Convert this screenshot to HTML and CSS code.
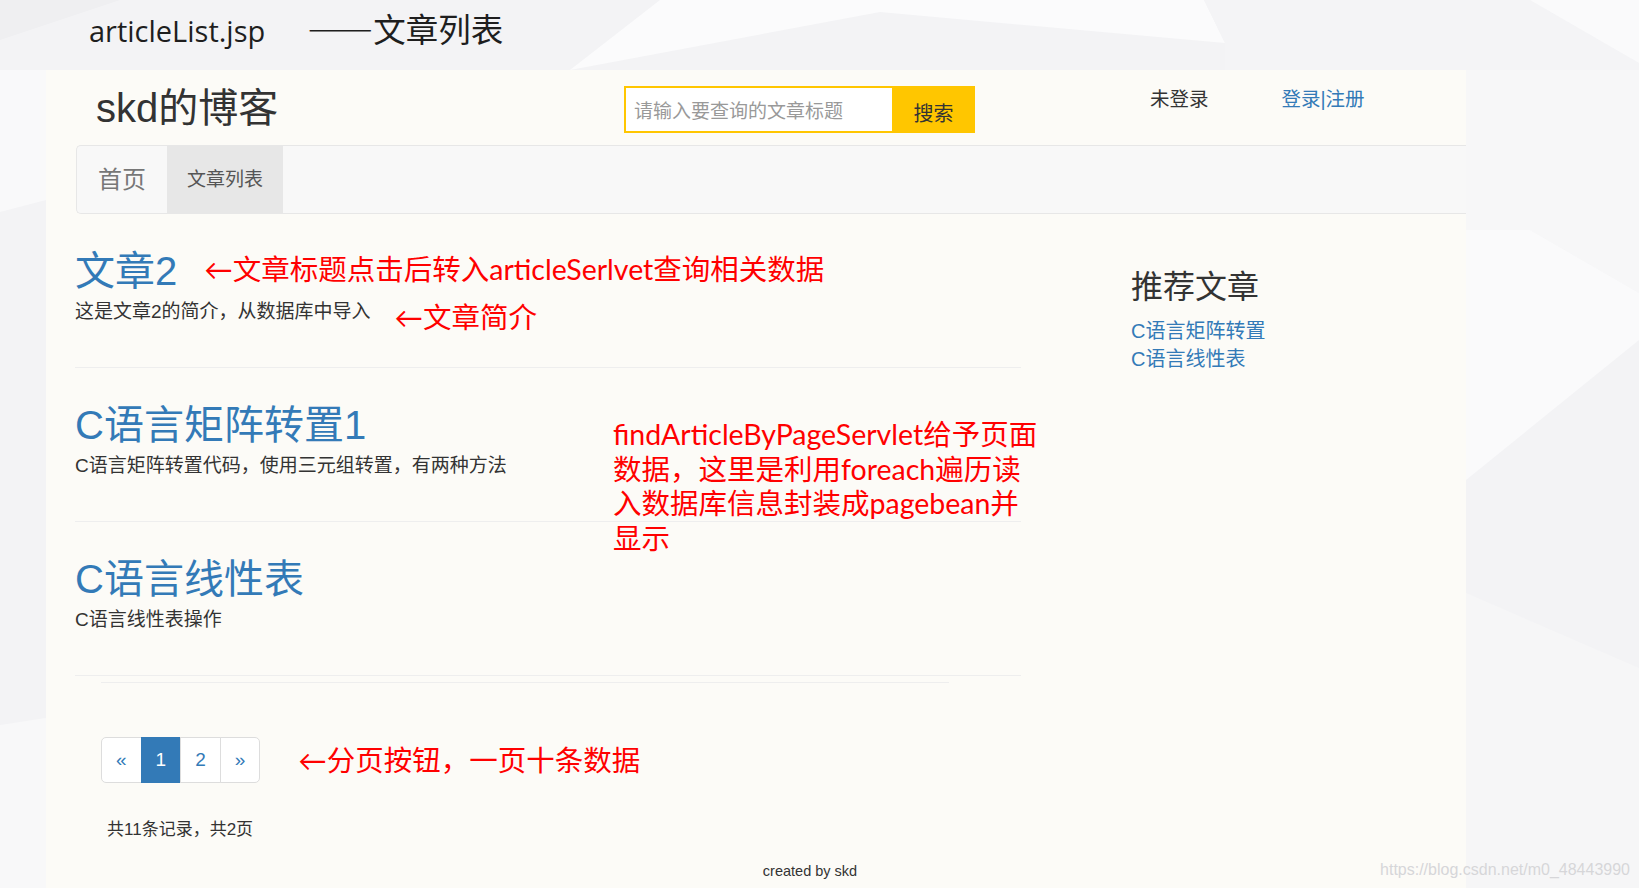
FILE: index.html
```html
<html lang="zh-CN">
<head>
    <meta charset="UTF-8">
    <meta name="viewport" content="width=device-width, initial-scale=1.0">
    <title>articleList.jsp</title>
    <link rel="stylesheet" href="styles.css">
</head>
<body>
    <!-- slide backdrop -->
    <svg class="backdrop" width="1639" height="888" viewBox="0 0 1639 888">
        <rect width="1639" height="888" fill="#f3f3f5"/>
        <polygon points="0,0 120,0 0,40" fill="#efeff1"/>
        <polygon points="570,70 660,0 1204,0 1225,43 880,12" fill="#fbfbfc"/>
        <polygon points="1204,0 1530,0 1639,63 1639,70 1225,70 1225,43" fill="#f4f4f6"/>
        <polygon points="1530,0 1639,0 1639,63" fill="#fafafb"/>
        <polygon points="1466,70 1639,70 1639,293 1530,230 1466,230" fill="#f7f7f8"/>
        <polygon points="1530,230 1639,293 1639,340 1466,480 1466,230" fill="#fafafb"/>
        <polygon points="1466,593 1639,668 1639,888 1466,888" fill="#f6f6f7"/>
        <polygon points="0,70 46,70 46,200 0,212" fill="#f9f9fa"/>
        <polygon points="0,725 46,718 46,888 0,888" fill="#f8f8f9"/>
    </svg>

    <div class="slide-title">
        <span class="en">articleList.jsp</span><span class="dash">——</span><span class="zh">文章列表</span>
    </div>

    <div class="page">
        <div class="header">
            <div class="brand"><h1>skd的博客</h1></div>
            <form class="search" onsubmit="return false">
                <input type="text" placeholder="请输入要查询的文章标题">
                <button type="submit">搜索</button>
            </form>
            <div class="user">
                <span class="status">未登录</span>
                <a href="#" class="login">登录|注册</a>
            </div>
        </div>

        <ul class="nav">
            <li><a href="#">首页</a></li>
            <li class="active"><a href="#">文章列表</a></li>
        </ul>

        <div class="content">
            <div class="main">
                <div class="article">
                    <div class="row">
                        <h2><a href="#">文章2</a></h2>
                        <span class="note note-title">←文章标题点击后转入articleSerlvet查询相关数据</span>
                    </div>
                    <div class="row sum">
                        <p class="summary">这是文章2的简介，从数据库中导入</p>
                        <span class="note note-sum">←文章简介</span>
                    </div>
                </div>
                <div class="article">
                    <div class="row">
                        <h2><a href="#">C语言矩阵转置1</a></h2>
                    </div>
                    <div class="row sum">
                        <p class="summary">C语言矩阵转置代码，使用三元组转置，有两种方法</p>
                    </div>
                </div>
                <div class="article">
                    <div class="row">
                        <h2><a href="#">C语言线性表</a></h2>
                    </div>
                    <div class="row sum">
                        <p class="summary">C语言线性表操作</p>
                    </div>
                </div>

                <div class="pager-area">
                    <div class="pager-row">
                        <ul class="pagination">
                            <li><a href="#">&laquo;</a></li>
                            <li class="active"><a href="#">1</a></li>
                            <li><a href="#">2</a></li>
                            <li><a href="#">&raquo;</a></li>
                        </ul>
                        <span class="note note-pager">←分页按钮，一页十条数据</span>
                    </div>
                    <p class="count">共11条记录，共2页</p>
                </div>
            </div>

            <div class="side">
                <h3>推荐文章</h3>
                <ul>
                    <li><a href="#">C语言矩阵转置</a></li>
                    <li><a href="#">C语言线性表</a></li>
                </ul>
            </div>

            <div class="note note-block">
                <div>findArticleByPageServlet给予页面</div>
                <div>数据，这里是利用foreach遍历读</div>
                <div>入数据库信息封装成pagebean并</div>
                <div>显示</div>
            </div>
        </div>

        <div class="footer">created by skd</div>
    </div>

    <div class="watermark">https://blog.csdn.net/m0_48443990</div>
</body>
</html>
```

FILE: styles.css
```css
body {
    margin: 0;
    height: 888px;
    overflow: hidden;
    position: relative;
    background-color: #f3f3f5;
    font-family: "Liberation Sans", "Noto Sans CJK SC", sans-serif;
    color: #333;
}

a {
    color: #337ab7;
    text-decoration: none;
}

.backdrop {
    position: absolute;
    top: 0;
    left: 0;
}

/* slide heading above the screenshot */
.slide-title {
    position: relative;
    height: 70px;
    box-sizing: border-box;
    padding: 8px 0 0 89px;
    line-height: 40px;
    color: #1e1e1e;
    white-space: nowrap;
}

.slide-title .en {
    font-family: "Open Sans", "Noto Sans CJK SC", sans-serif;
    font-size: 29px;
}

.slide-title .dash {
    font-family: "Noto Sans CJK SC", sans-serif;
    font-size: 33px;
    margin-left: 42px;
    vertical-align: -1px;
}

.slide-title .zh {
    font-family: "Noto Sans CJK SC", sans-serif;
    font-size: 32.5px;
}

/* the blog page */
.page {
    position: relative;
    margin-left: 46px;
    width: 1420px;
    height: 818px;
    background-color: #fcfbf7;
}

.header {
    display: flex;
    align-items: flex-start;
    height: 75px;
    box-sizing: border-box;
    padding: 16px 0 0 50px;
}

.brand {
    width: 528px;
}

.brand h1 {
    margin: 0;
    font-size: 40px;
    line-height: 44px;
    font-weight: normal;
    color: #333;
}

.search {
    display: flex;
    height: 47px;
    margin: 0;
}

.search input {
    width: 268px;
    height: 47px;
    box-sizing: border-box;
    border: 2px solid #ffc600;
    border-right: none;
    padding: 4px 8px 0;
    background-color: #fff;
    font-family: "Liberation Sans", "Noto Sans CJK SC", sans-serif;
    font-size: 19px;
    outline: none;
}

.search input::placeholder {
    color: #999;
}

.search button {
    width: 83px;
    height: 47px;
    border: none;
    background-color: #ffc600;
    font-family: "Liberation Sans", "Noto Sans CJK SC", sans-serif;
    font-size: 20px;
    color: #333;
    padding: 5px 0 0;
    cursor: pointer;
}

.user {
    display: flex;
    margin-left: 175px;
    font-size: 19.5px;
    line-height: 27px;
}

.user .login {
    margin-left: 73px;
}

.nav {
    display: flex;
    list-style: none;
    margin: 0 0 0 30px;
    padding: 0;
    height: 69px;
    box-sizing: border-box;
    border: 1px solid #e7e7e7;
    border-right: none;
    border-radius: 5px 0 0 5px;
    background-color: #f8f8f8;
}

.nav li a {
    display: block;
    line-height: 67px;
    padding: 0 21px;
    font-size: 24px;
    color: #777;
}

.nav li.active a {
    background-color: #e7e7e7;
    color: #555;
    font-size: 19px;
    padding: 0 20px;
}

.content {
    position: relative;
    display: flex;
    padding-left: 29px;
}

.main {
    width: 946px;
}

.article {
    padding: 35px 0 42px;
    border-bottom: 1px solid #eee;
}

.row {
    display: flex;
    align-items: center;
}

.row.sum {
    align-items: flex-start;
    margin-top: 5px;
}

.article h2 {
    margin: 0;
    font-size: 40px;
    line-height: 44px;
    font-weight: normal;
}

.summary {
    margin: 0;
    font-size: 19px;
    line-height: 27px;
    color: #333;
}

/* red annotations */
.note {
    font-family: Lato, "Noto Sans CJK SC", sans-serif;
    font-size: 28.5px;
    line-height: 34px;
    color: #ff0000;
    white-space: nowrap;
}

.note-title {
    margin: 0 0 4px 27px;
}

.note-sum {
    line-height: 27px;
    margin: 6px 0 -6px 24px;
}

.note-block {
    position: absolute;
    left: 567px;
    top: 203px;
    line-height: 34.6px;
}

.pager-area {
    margin: 6px 72px 0 26px;
    border-top: 1px solid #eee;
}

.pager-row {
    display: flex;
    align-items: center;
    margin-top: 54px;
}

.pagination {
    display: flex;
    list-style: none;
    margin: 0;
    padding: 0;
}

.pagination li a {
    display: block;
    padding: 8px 14px;
    line-height: 28px;
    font-size: 19px;
    color: #337ab7;
    background-color: #fff;
    border: 1px solid #ddd;
    margin-left: -1px;
}

.pagination li:first-child a {
    margin-left: 0;
    border-radius: 5px 0 0 5px;
}

.pagination li:last-child a {
    border-radius: 0 5px 5px 0;
}

.pagination li.active a {
    background-color: #337ab7;
    border-color: #337ab7;
    color: #fff;
}

.note-pager {
    margin-left: 38px;
}

.count {
    margin: 35px 0 0 6px;
    font-size: 17px;
    line-height: 24px;
    color: #333;
}

.side {
    margin-left: 110px;
    padding-top: 56px;
}

.side h3 {
    margin: 0;
    font-size: 32px;
    line-height: 35px;
    font-weight: normal;
    color: #333;
}

.side ul {
    list-style: none;
    margin: 12px 0 0;
    padding: 0;
}

.side li {
    font-size: 20px;
    line-height: 28px;
}

.footer {
    margin-top: 19px;
    padding-left: 108px;
    text-align: center;
    font-size: 14.5px;
    line-height: 20px;
    color: #333;
}

.watermark {
    position: absolute;
    right: 9px;
    bottom: 9px;
    font-size: 16px;
    line-height: 18px;
    color: #d6d6d9;
}
```
